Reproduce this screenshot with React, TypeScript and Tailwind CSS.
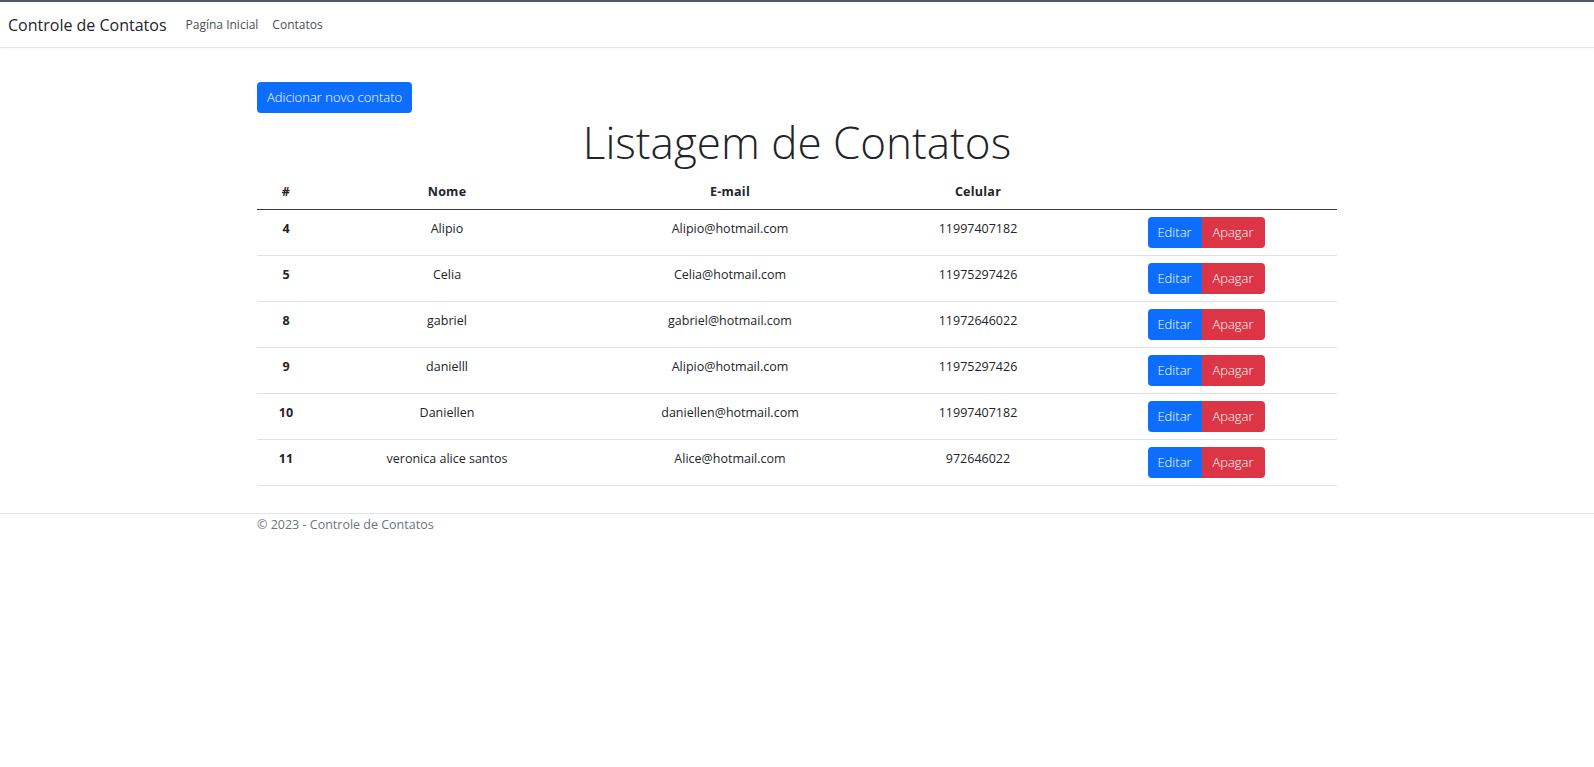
import React from "react";

type Contato = { id: number; nome: string; email: string; celular: string };

const contatos: Contato[] = [
  { id: 4, nome: "Alipio", email: "Alipio@hotmail.com", celular: "11997407182" },
  { id: 5, nome: "Celia", email: "Celia@hotmail.com", celular: "11975297426" },
  { id: 8, nome: "gabriel", email: "gabriel@hotmail.com", celular: "11972646022" },
  { id: 9, nome: "danielll", email: "Alipio@hotmail.com", celular: "11975297426" },
  { id: 10, nome: "Daniellen", email: "daniellen@hotmail.com", celular: "11997407182" },
  { id: 11, nome: "veronica alice santos", email: "Alice@hotmail.com", celular: "972646022" },
];

const font = "font-['Open_Sans','Noto_Sans',sans-serif]";

function Navbar() {
  return (
    <nav className="flex h-[48px] items-center border-t-2 border-b border-t-[#4b5b68] border-b-[#e5e5e5] bg-white px-2 shadow-[0_1px_2px_rgba(0,0,0,0.03)]">
      <span className="mr-[19px] text-[16px] leading-none text-[#212529]">Controle de Contatos</span>
      <a className="mr-[14px] text-[12px] text-[#4a4f54]">Pagína Inicial</a>
      <a className="text-[12px] text-[#4a4f54]">Contatos</a>
    </nav>
  );
}

function ContatoRow({ c }: { c: Contato }) {
  return (
    <tr className="border-b border-[#dee2e6] align-top">
      <td className="h-[46px] pt-[8px] font-bold">{c.id}</td>
      <td className="pt-[8px]">{c.nome}</td>
      <td className="pt-[8px]">{c.email}</td>
      <td className="pt-[8px]">{c.celular}</td>
      <td className="pt-[7px]">
        <div className="inline-flex">
          <button className="h-[31px] w-[54px] rounded-l-[4px] bg-[#0d6efd] text-[13px] font-light text-white">Editar</button>
          <button className="h-[31px] w-[63px] rounded-r-[4px] bg-[#dc3545] text-[13px] font-light text-white">Apagar</button>
        </div>
      </td>
    </tr>
  );
}

export default function App() {
  return (
    <div className={`min-h-[767px] bg-white text-[#212529] ${font}`}>
      <Navbar />

      <main className="mx-auto w-[1080px] pt-[34px]">
        <button className="h-[31px] rounded-[4px] bg-[#0d6efd] px-[10px] text-[13px] font-light text-white">
          Adicionar novo contato
        </button>

        <h1 className="mt-[2px] text-center text-[44px] font-light leading-[54px] text-[#212529]">
          Listagem de Contatos
        </h1>

        <table className="mt-[5px] w-full table-fixed text-center text-[12.5px] leading-[21px]">
          <colgroup>
            <col className="w-[58px]" />
            <col className="w-[264px]" />
            <col className="w-[302px]" />
            <col className="w-[194px]" />
            <col />
          </colgroup>
          <thead>
            <tr className="border-b-[1.5px] border-[#3a3a3a]">
              <th className="py-[7px] font-bold tracking-[0.02em]">#</th>
              <th className="py-[7px] font-bold tracking-[0.02em]">Nome</th>
              <th className="py-[7px] font-bold tracking-[0.02em]">E-mail</th>
              <th className="py-[7px] font-bold tracking-[0.02em]">Celular</th>
              <th className="py-[7px]"></th>
            </tr>
          </thead>
          <tbody>
            {contatos.map((c) => (
              <ContatoRow key={c.id} c={c} />
            ))}
          </tbody>
        </table>
      </main>

      <footer className="mt-[27px] border-t border-[#e5e5e5]">
        <div className="mx-auto w-[1080px] text-[12.5px] leading-[21px] text-[#6c757d]">
          © 2023 - Controle de Contatos
        </div>
      </footer>
    </div>
  );
}
